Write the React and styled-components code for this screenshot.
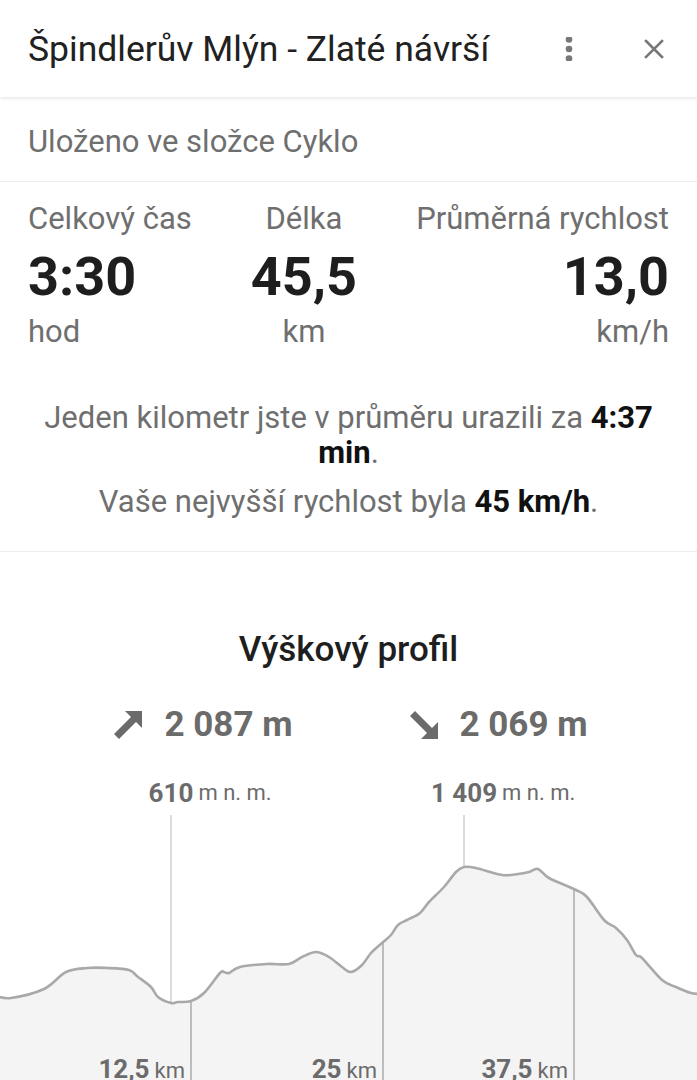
import React from 'react';
import styled, { createGlobalStyle } from 'styled-components';

const GlobalStyle = createGlobalStyle`
	html, body {
		margin: 0;
		padding: 0;
		background: #fff;
		overflow: hidden;
	}
	body {
		font-family: Roboto, 'Noto Sans', sans-serif;
		-webkit-font-smoothing: antialiased;
	}
`;

const Page = styled.div`
	width: 697px;
	height: 1080px;
	overflow: hidden;
	background: #fff;
	display: flex;
	flex-direction: column;
`;

const Header = styled.header`
	position: relative;
	z-index: 2;
	height: 97px;
	flex-shrink: 0;
	display: flex;
	align-items: center;
	padding-left: 28px;
	background: #fff;
	box-shadow: 0 1px 4px rgba(0, 0, 0, 0.13);
`;

const Title = styled.h1`
	flex: 1;
	margin: 0;
	font-size: 35.5px;
	font-weight: 400;
	color: #212121;
	white-space: nowrap;
`;

const IconButton = styled.button`
	width: 24px;
	height: 24px;
	padding: 0;
	border: none;
	background: none;
	display: flex;
	margin-right: ${props => props.gap}px;
`;

const FolderRow = styled.div`
	padding: 25px 28px 19px;
	font-size: 31px;
	line-height: 40px;
	color: #6f6f6f;
	border-bottom: 1px solid #ececec;
`;

const Stats = styled.div`
	display: flex;
	justify-content: space-between;
	padding: 19px 28px 0;
`;

const Stat = styled.div`
	display: flex;
	flex-direction: column;
	align-items: ${props => props.align};
`;

const StatLabel = styled.div`
	font-size: 31px;
	line-height: 36px;
	color: #6f6f6f;
`;

const StatValue = styled.div`
	margin-top: 10px;
	font-size: 54px;
	line-height: 60px;
	font-weight: 700;
	color: #1e1e1e;
`;

const StatUnit = styled.div`
	margin-top: 7px;
	font-size: 31px;
	line-height: 36px;
	color: #6f6f6f;
`;

const Summary = styled.div`
	padding: 50px 28px 32px;
	text-align: center;
	border-bottom: 1px solid #ececec;
`;

const SummaryLine = styled.p`
	margin: ${props => (props.first ? 0 : 14)}px 0 0;
	font-size: 31px;
	line-height: 35px;
	color: #6f6f6f;

	b {
		color: #111;
		font-weight: 700;
	}
`;

const Profile = styled.section`
	flex: 1;
	display: flex;
	flex-direction: column;
	padding-top: 77px;
`;

const ProfileTitle = styled.h2`
	margin: 0;
	text-align: center;
	font-size: 35px;
	line-height: 42px;
	font-weight: 500;
	color: #1e1e1e;
`;

const Climbs = styled.div`
	display: flex;
	justify-content: center;
	gap: 116px;
	margin-top: 33px;
	padding-left: 4px;
`;

const Climb = styled.div`
	display: flex;
	align-items: center;
	gap: 21px;
	font-size: 35px;
	line-height: 42px;
	font-weight: 700;
	color: #6b6b6b;
`;

const Chart = styled.div`
	position: relative;
	margin-top: 14px;
	height: 320px;
`;

const ChartSvg = styled.svg`
	display: block;
	width: 697px;
	height: 320px;
`;

const PeakLabel = styled.div`
	position: absolute;
	top: 18px;
	transform: translateX(-50%);
	font-size: 26px;
	line-height: 30px;
	font-weight: 700;
	color: #6b6b6b;
	white-space: nowrap;
`;

const PeakUnit = styled.span`
	position: absolute;
	left: 100%;
	bottom: 0;
	padding-left: 5px;
	font-size: 22px;
	line-height: 30px;
	font-weight: 400;
	white-space: nowrap;
`;

const DistLabel = styled.div`
	position: absolute;
	top: 294px;
	font-size: 26px;
	line-height: 30px;
	font-weight: 700;
	color: #6b6b6b;
	white-space: nowrap;

	span {
		margin-left: 5px;
		font-size: 22px;
		font-weight: 400;
	}
`;

const TOP = 760;

const profile = [
	[-4, 996], [11, 998], [44, 989], [66, 972], [87, 968], [107, 968], [129, 970],
	[138, 977], [151, 987], [158, 997], [171, 1003], [178, 1002], [191, 1001],
	[204, 993], [220, 973], [224, 972], [229, 973], [240, 967], [267, 964],
	[289, 964], [302, 957], [316, 952], [329, 957], [342, 967], [351, 972],
	[362, 965], [371, 953], [382, 943], [391, 935], [398, 925], [407, 920],
	[420, 913], [429, 902], [444, 887], [456, 872], [464, 867], [476, 868],
	[502, 875], [518, 874], [529, 872], [538, 869], [549, 878], [576, 890],
	[587, 897], [604, 920], [616, 928], [627, 940], [636, 955], [642, 958],
	[662, 980], [676, 987], [691, 993], [701, 994],
].map(([x, y]) => [x, y - TOP]);

// catmull-rom -> bezier, keeps the line soft like the app draws it
const smoothPath = pts => {
	let d = `M${pts[0][0]},${pts[0][1]}`;
	for (let i = 0; i < pts.length - 1; i++) {
		const p0 = pts[i - 1] || pts[i];
		const p1 = pts[i];
		const p2 = pts[i + 1];
		const p3 = pts[i + 2] || p2;
		const c1 = [p1[0] + (p2[0] - p0[0]) / 6, p1[1] + (p2[1] - p0[1]) / 6];
		const c2 = [p2[0] - (p3[0] - p1[0]) / 6, p2[1] - (p3[1] - p1[1]) / 6];
		d += ` C${c1[0].toFixed(1)},${c1[1].toFixed(1)} ${c2[0].toFixed(1)},${c2[1].toFixed(1)} ${p2[0]},${p2[1]}`;
	}
	return d;
};

const linePath = smoothPath(profile);
const areaPath = `${linePath} L701,330 L-4,330 Z`;

const peaks = [
	{ x: 171, y: 1003, value: '610' },
	{ x: 464, y: 867, value: '1 409' },
];

const marks = [
	{ x: 191, y: 1001, value: '12,5' },
	{ x: 383, y: 943, value: '25' },
	{ x: 574, y: 889, value: '37,5' },
];

const DotsIcon = () => (
	<svg width="24" height="24" viewBox="0 0 24 24" fill="#777">
		<circle cx="12" cy="2.5" r="3.3" />
		<circle cx="12" cy="12" r="3.3" />
		<circle cx="12" cy="21.5" r="3.3" />
	</svg>
);

const CloseIcon = () => (
	<svg width="24" height="24" viewBox="0 0 24 24" stroke="#777" strokeWidth="2.6" strokeLinecap="square">
		<path d="M4 4 L20 20 M20 4 L4 20" />
	</svg>
);

const ArrowUp = () => (
	<svg width="30" height="30" viewBox="0 0 30 30" fill="#6b6b6b">
		<path d="M12 1 L29 1 L29 18 Z" />
		<path d="M1 24 L19 6 L24 11 L6 29 Z" />
	</svg>
);

const ArrowDown = () => (
	<svg width="30" height="30" viewBox="0 0 30 30" fill="#6b6b6b">
		<path d="M29 12 L29 29 L12 29 Z" />
		<path d="M6 1 L24 19 L19 24 L1 6 Z" />
	</svg>
);

export default function App() {
	return (
		<Page>
			<GlobalStyle />
			<Header>
				<Title>Špindlerův Mlýn - Zlaté návrší</Title>
				<IconButton gap={61}><DotsIcon /></IconButton>
				<IconButton gap={31}><CloseIcon /></IconButton>
			</Header>

			<FolderRow>Uloženo ve složce Cyklo</FolderRow>

			<Stats>
				<Stat align="flex-start">
					<StatLabel>Celkový čas</StatLabel>
					<StatValue>3:30</StatValue>
					<StatUnit>hod</StatUnit>
				</Stat>
				<Stat align="center">
					<StatLabel>Délka</StatLabel>
					<StatValue>45,5</StatValue>
					<StatUnit>km</StatUnit>
				</Stat>
				<Stat align="flex-end">
					<StatLabel>Průměrná rychlost</StatLabel>
					<StatValue>13,0</StatValue>
					<StatUnit>km/h</StatUnit>
				</Stat>
			</Stats>

			<Summary>
				<SummaryLine first>
					Jeden kilometr jste v průměru urazili za <b>4:37</b> <b>min</b>.
				</SummaryLine>
				<SummaryLine>
					Vaše nejvyšší rychlost byla <b>45 km/h</b>.
				</SummaryLine>
			</Summary>

			<Profile>
				<ProfileTitle>Výškový profil</ProfileTitle>
				<Climbs>
					<Climb><ArrowUp />2 087 m</Climb>
					<Climb><ArrowDown />2 069 m</Climb>
				</Climbs>
				<Chart>
					<ChartSvg viewBox="0 0 697 320">
						<path d={areaPath} fill="#f4f4f4" />
						{peaks.map(p => (
							<line key={p.value} x1={p.x} x2={p.x} y1={55} y2={p.y - TOP} stroke="#cfcfcf" strokeWidth="1.5" />
						))}
						{marks.map(m => (
							<line key={m.value} x1={m.x} x2={m.x} y1={m.y - TOP} y2={320} stroke="#ababab" strokeWidth="1.5" />
						))}
						<path d={linePath} fill="none" stroke="#a9a9a9" strokeWidth="2.6" strokeLinejoin="round" />
					</ChartSvg>
					{peaks.map(p => (
						<PeakLabel key={p.value} style={{ left: p.x }}>
							{p.value}
							<PeakUnit>m n. m.</PeakUnit>
						</PeakLabel>
					))}
					{marks.map(m => (
						<DistLabel key={m.value} style={{ right: 697 - m.x + 6 }}>
							{m.value}<span>km</span>
						</DistLabel>
					))}
				</Chart>
			</Profile>
		</Page>
	);
}
